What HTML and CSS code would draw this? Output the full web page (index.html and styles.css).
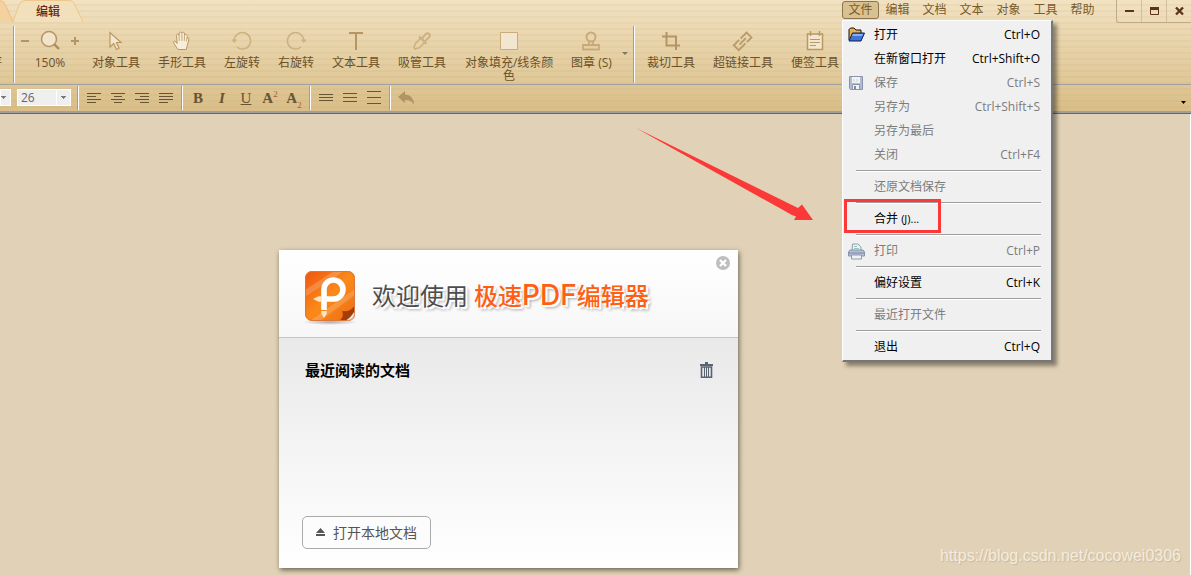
FILE: index.html
```html
<!DOCTYPE html>
<html lang="zh-CN">
<head>
<meta charset="utf-8">
<title>极速PDF编辑器</title>
<link rel="stylesheet" href="styles.css">
</head>
<body>
<div class="app">
  <header class="chrome">
    <div class="titlebar">
      <div class="tabs">
        <svg class="tab-prev" width="13" height="23" viewBox="0 0 13 23" aria-hidden="true"><path d="M0 1Q4 1 6 6L13 22H0Z" fill="#f4d2a0"/><path d="M0 .5Q4 .5 6 6L13 22" fill="none" stroke="#f3bb80"/></svg>
        <button class="tab" type="button">
          <svg class="tab-shape" viewBox="0 0 70 23" preserveAspectRatio="none" aria-hidden="true"><path d="M0 22L6 5Q8 .5 12 .5H57Q60 .5 62 5L70 22Z" fill="#f2dfbc"/><path d="M0 22L6 5Q8 .5 12 .5H57Q60 .5 62 5L70 22" fill="none" stroke="#efc78c"/></svg>
          <span class="tab-label">编辑</span>
        </button>
      </div>
      <nav class="menubar">
        <div class="menu-anchor">
          <button class="menu-btn open" type="button">文件</button>
          <div class="menu" role="menu">
            <button class="item" type="button"><span class="ico"><svg width="17" height="16" viewBox="0 0 17 16"><path d="M1 13V2.500L2.500 1H6L8 3H13V6" fill="#e9b04c" stroke="#111"/><path d="M1 14L4.500 6H16.500L13 14Z" fill="#3f74d8" stroke="#111b55"/><path d="M5 7H15L14 9H4Z" fill="#83b2f4"/></svg></span><span>打开</span><kbd>Ctrl+O</kbd></button>
            <button class="item" type="button"><span class="ico"></span><span>在新窗口打开</span><kbd>Ctrl+Shift+O</kbd></button>
            <button class="item" type="button" disabled><span class="ico"><svg width="16" height="16" viewBox="0 0 16 16"><path d="M1.500 1.500H14.500V14.500H2.500L1.500 13.500Z" fill="#b3bbd2" stroke="#8a92ab"/><path d="M4 2H12V8H4Z" fill="#f3f3f3"/><path d="M6 4V7M9 4V7" stroke="#c8cedd"/><path d="M4.500 9.500H11.500V14.500H4.500Z" fill="#f3f3f3" stroke="#8c94ab"/><path d="M6 11H8V14H6Z" fill="#7e87a3"/></svg></span><span>保存</span><kbd>Ctrl+S</kbd></button>
            <button class="item" type="button" disabled><span class="ico"></span><span>另存为</span><kbd>Ctrl+Shift+S</kbd></button>
            <button class="item" type="button" disabled><span class="ico"></span><span>另存为最后</span></button>
            <button class="item" type="button" disabled><span class="ico"></span><span>关闭</span><kbd>Ctrl+F4</kbd></button>
            <hr>
            <button class="item" type="button" disabled><span class="ico"></span><span>还原文档保存</span></button>
            <hr>
            <button class="item marked" type="button"><span class="ico"></span><span>合并 <small>(J)...</small></span></button>
            <hr>
            <button class="item" type="button" disabled><span class="ico"><svg width="17" height="17" viewBox="0 0 17 17"><path d="M4 8L4.500 1H10L13 4V8Z" fill="#e6f4f4" stroke="#8ba2a8"/><path d="M6 3.500H9M6 5.500H11" stroke="#9bc3c4"/><path d="M2 7H15L16.500 9V13H.500V9Z" fill="#b6bfd5" stroke="#8891ae"/><path d="M1 10H16" stroke="#7c86a6"/><path d="M3.500 12H13.500V16H3.500Z" fill="#eef2f4" stroke="#909aac"/></svg></span><span>打印</span><kbd>Ctrl+P</kbd></button>
            <hr>
            <button class="item" type="button"><span class="ico"></span><span>偏好设置</span><kbd>Ctrl+K</kbd></button>
            <hr>
            <button class="item" type="button" disabled><span class="ico"></span><span>最近打开文件</span></button>
            <hr>
            <button class="item" type="button"><span class="ico"></span><span>退出</span><kbd>Ctrl+Q</kbd></button>
          </div>
        </div>
        <button class="menu-btn" type="button">编辑</button>
        <button class="menu-btn" type="button">文档</button>
        <button class="menu-btn" type="button">文本</button>
        <button class="menu-btn" type="button">对象</button>
        <button class="menu-btn" type="button">工具</button>
        <button class="menu-btn" type="button">帮助</button>
      </nav>
      <div class="win">
        <button type="button" aria-label="最小化"><svg width="11" height="10" viewBox="0 0 11 10"><path d="M1 5H10" stroke="#5a3418" stroke-width="2"/></svg></button>
        <button type="button" aria-label="最大化"><svg width="11" height="10" viewBox="0 0 11 10"><path d="M1.500 2V8.500H9.500V2" fill="none" stroke="#5a3418"/><path d="M1 2.500H10" stroke="#5a3418" stroke-width="3"/></svg></button>
        <button type="button" aria-label="关闭"><svg width="11" height="10" viewBox="0 0 11 10"><path d="M2 1.500L9 8.500M9 1.500L2 8.500" stroke="#5a3418" stroke-width="2.400"/></svg></button>
      </div>
    </div>

    <div class="toolbar">
      <span class="cut">存</span>
      <i class="sep"></i>
      <div class="zoom">
        <div class="zoom-row">
          <button type="button" aria-label="缩小"><svg width="10" height="20" viewBox="0 0 10 20"><path d="M1 10H9" stroke="#b59564" stroke-width="2"/></svg></button>
          <svg width="20" height="20" viewBox="0 0 20 20"><circle cx="9" cy="8" r="7.500" fill="#f1e4cb" stroke="#b59564" stroke-width="1.500"/><path d="M14 13L19 18" stroke="#ad8c5a" stroke-width="2.400"/></svg>
          <button type="button" aria-label="放大"><svg width="10" height="20" viewBox="0 0 10 20"><path d="M1 10H9M5 6V14" stroke="#b59564" stroke-width="2"/></svg></button>
        </div>
        <span>150%</span>
      </div>
      <button class="tool" type="button"><svg width="20" height="20" viewBox="0 0 20 20"><path d="M4 1.500V16L7.700 12.500L10.500 18.500L13 17.300L10.500 11.500H15Z" fill="#f3e7d0" stroke="#b99862" stroke-width="1.200"/></svg><span>对象工具</span></button>
      <button class="tool" type="button"><svg width="20" height="20" viewBox="0 0 20 20"><path d="M6 18.500L1.800 12.300Q1 10.500 2.500 10.300Q4 10.300 5.200 12.500L4.500 4.500Q4.500 3 5.700 3Q6.800 3 7 4.500L7.200 2.500Q7.400 1 8.500 1Q9.800 1 9.900 2.500V2.300Q10.400 1 11.400 1.200Q12.600 1.400 12.500 3V4.500Q13.300 3 14.400 3.500Q15.300 4 15.300 5.300L15 7.500Q15.500 6.500 16.300 6.800Q17.200 7.300 16.800 9L15 15.500Q14.600 17 14.300 18.500Z" fill="#f7edda" stroke="#b99862"/><path d="M7.200 4V10M9.900 3V10M12.500 4L12.300 10M15 7L14.500 10.500" stroke="#c7aa78" fill="none"/></svg><span>手形工具</span></button>
      <button class="tool" type="button"><svg width="20" height="20" viewBox="0 0 20 20"><path d="M2.200 10A8.200 8.200 0 1 1 5 16" fill="none" stroke="#ccb080" stroke-width="1.500"/><path d="M-.500 8.500H5L2.300 12Z" fill="#ccb080"/></svg><span>左旋转</span></button>
      <button class="tool" type="button"><svg width="20" height="20" viewBox="0 0 20 20"><path d="M17.800 10A8.200 8.200 0 1 0 15 16" fill="none" stroke="#ccb080" stroke-width="1.500"/><path d="M20.500 8.500H15L17.700 12Z" fill="#ccb080"/></svg><span>右旋转</span></button>
      <button class="tool" type="button"><svg width="20" height="20" viewBox="0 0 20 20"><path d="M3 2H17M10 2V19" stroke="#b59564" stroke-width="2"/></svg><span>文本工具</span></button>
      <button class="tool" type="button"><svg width="20" height="20" viewBox="0 0 20 20"><path d="M3 18L2 16.500L3.500 12.500L9 7L13 11L7.500 16.500Z" fill="#e8d2a6" stroke="#cdb182" stroke-width="1.600"/><path d="M7 5.500L14.500 13M10.500 7L14 2.700Q16 1.500 17.300 3Q18.500 4.500 17 6.500L13 10" fill="none" stroke="#cdb182" stroke-width="2"/></svg><span>吸管工具</span></button>
      <button class="tool wide" type="button"><svg width="20" height="20" viewBox="0 0 20 20"><path d="M1.500 1.500H18.500V18.500H1.500Z" fill="#f2e6d0" stroke="#c8ac7c"/></svg><span>对象填充/线条颜色</span></button>
      <button class="tool stamp" type="button"><svg width="20" height="20" viewBox="0 0 20 20"><circle cx="10" cy="6" r="4.500" fill="none" stroke="#c8aa78" stroke-width="2"/><path d="M8 10V13.500M12 10V13.500M2 14H18V18.500H2Z" fill="none" stroke="#c8aa78" stroke-width="1.800"/></svg><span>图章 (S)</span></button>
      <svg class="drop" width="6" height="4" viewBox="0 0 6 4" aria-hidden="true"><path d="M0 0H6L3 3Z" fill="#807867"/></svg>
      <i class="sep"></i>
      <button class="tool first" type="button"><svg width="20" height="20" viewBox="0 0 20 20"><path d="M1 5.500H15V19M5.500 1V14.500H19" fill="none" stroke="#b59564" stroke-width="2"/></svg><span>裁切工具</span></button>
      <button class="tool" type="button"><svg width="20" height="20" viewBox="0 0 20 20"><g transform="rotate(-45 10 10)" fill="none" stroke="#b99a68" stroke-width="1.800"><path d="M10 6.500H18.500V13.500H12M8 6.500H.500V13.500H10M5 10H14"/></g></svg><span>超链接工具</span></button>
      <button class="tool" type="button"><svg width="20" height="20" viewBox="0 0 20 20"><path d="M2.500 3H17.500V18.500H2.500Z" fill="#f2e6d0" stroke="#b99862" stroke-width="1.500"/><path d="M5.500 0V5M14.500 0V5" stroke="#b99862" stroke-width="1.500"/><path d="M5 8.500H15M5 11.500H15M5 14.500H11" stroke="#b99862"/></svg><span>便签工具</span></button>
    </div>

    <div class="format">
      <select class="combo face" aria-label="字体"><option></option></select>
      <select class="combo size" aria-label="字号"><option>26</option></select>
      <i class="sep"></i>
      <button type="button" aria-label="左对齐"><svg width="14" height="14" viewBox="0 0 14 14"><path d="M0 2.500H14M0 5.500H9M0 8.500H14M0 11.500H9"/></svg></button>
      <button type="button" aria-label="居中"><svg width="14" height="14" viewBox="0 0 14 14"><path d="M0 2.500H14M3 5.500H11M0 8.500H14M3 11.500H11"/></svg></button>
      <button type="button" aria-label="右对齐"><svg width="14" height="14" viewBox="0 0 14 14"><path d="M0 2.500H14M5 5.500H14M0 8.500H14M5 11.500H14"/></svg></button>
      <button type="button" aria-label="两端对齐"><svg width="14" height="14" viewBox="0 0 14 14"><path d="M0 2.500H14M0 5.500H14M0 8.500H14M0 11.500H9"/></svg></button>
      <i class="sep"></i>
      <button type="button"><b>B</b></button>
      <button type="button"><b class="it">I</b></button>
      <button type="button"><span class="un">U</span></button>
      <button type="button"><b>A</b><sup>2</sup></button>
      <button type="button"><b>A</b><sub>2</sub></button>
      <i class="sep"></i>
      <button type="button" aria-label="行距小"><svg width="14" height="14" viewBox="0 0 14 14"><path d="M0 3.500H14M0 6.500H14M0 9.500H14"/></svg></button>
      <button type="button" aria-label="行距中"><svg width="14" height="14" viewBox="0 0 14 14"><path d="M0 2.500H14M0 6.500H14M0 10.500H14"/></svg></button>
      <button type="button" aria-label="行距大"><svg width="14" height="14" viewBox="0 0 14 14"><path d="M0 .500H14M0 6.500H14M0 12.500H14"/></svg></button>
      <i class="sep"></i>
      <button type="button" aria-label="撤销"><svg width="16" height="16" viewBox="0 0 16 16"><path class="solid" d="M0 7L7 1V4.500Q16 5 16 15Q13.500 9.500 7 10V13Z"/></svg></button>
      <svg class="more" width="5" height="3" viewBox="0 0 5 3" aria-hidden="true"><path class="ink" d="M0 0H5L2.500 3Z"/></svg>
    </div>
  </header>

  <main class="stage">
    <section class="welcome">
      <header class="welcome-head">
        <svg class="logo" width="56" height="58" viewBox="0 0 56 58" role="img" aria-label="极速PDF编辑器">
          <defs>
            <linearGradient id="lg" x1="0" y1="0" x2="1" y2="1"><stop offset="0" stop-color="#ee5411"/><stop offset=".5" stop-color="#fb8a1a"/><stop offset="1" stop-color="#ee6a12"/></linearGradient>
            <radialGradient id="sh"><stop offset="0" stop-color="#777" stop-opacity=".6"/><stop offset="1" stop-color="#777" stop-opacity="0"/></radialGradient>
            <clipPath id="cp"><rect x="3" y="3" width="50" height="50" rx="7"/></clipPath>
          </defs>
          <ellipse cx="28" cy="54" rx="28" ry="3" fill="url(#sh)"/>
          <rect x="3" y="3" width="50" height="50" rx="7" fill="url(#lg)"/>
          <g clip-path="url(#cp)"><path d="M0 24L32 3H42L0 31ZM8 53L53 21V27L18 53Z" fill="#fff" opacity=".18"/><path d="M36 54Q43 49 40 43Q48 45 54 36V54Z" fill="#a53b08"/><path d="M41 54Q50 50 54 40V54Z" fill="#f5efe9"/></g>
          <rect x="3.500" y="3.500" width="49" height="49" rx="7" fill="none" stroke="#d9783c"/>
          <path d="M22 42V21.500A9.500 9.500 0 1 1 31.500 31H20" fill="none" stroke="#fff" stroke-width="5.600"/>
          <path d="M19.200 43H24.800V45.500L22 50L19.200 45.500ZM19 28.200V33.800H16.500L11 31L16.500 28.200Z" fill="#ffe3bf"/>
        </svg>
        <h1>欢迎使用 <em>极速<span class="latin">PDF</span>编辑器</em></h1>
        <button class="close" type="button" aria-label="关闭"><svg width="14" height="14" viewBox="0 0 14 14"><circle cx="7" cy="7" r="7" fill="#bebebe"/><path d="M4 4L10 10M10 4L4 10" stroke="#fff" stroke-width="2.400"/></svg></button>
      </header>
      <div class="welcome-body">
        <div class="recent">
          <h2>最近阅读的文档</h2>
          <button class="trash" type="button" aria-label="清空"><svg width="13" height="16" viewBox="0 0 13 16"><path d="M0 2H13V4H0ZM5 0H8V2H5Z" fill="#5c6370"/><path d="M1.500 5H11.500V15.200H1.500Z" fill="#e8e8ea" stroke="#5c6370" stroke-width="1.600"/><path d="M4.500 5V15M6.500 5V15M8.500 5V15" stroke="#5c6370"/></svg></button>
        </div>
        <button class="local" type="button"><svg width="9" height="8" viewBox="0 0 9 8"><path d="M4.500 0L9 5H0ZM0 6H9V8H0Z" fill="#555"/></svg>打开本地文档</button>
      </div>
    </section>
    <svg class="arrow" width="178" height="94" viewBox="0 0 178 94" aria-hidden="true"><path d="M0 0L162 80L166 76.500L177 92H158L160 88.500L156 87Z" fill="#fb3939"/></svg>
    <span class="watermark">https://blog.csdn.net/cocowei0306</span>
  </main>
</div>
</body>
</html>
```
FILE: styles.css
```css
*, *::after { box-sizing: border-box; }
body {
  margin: 0;
  font: 12px/16px "Open Sans", "Noto Sans CJK SC", sans-serif;
  color: #6b5127;
}
button, select { font: inherit; color: inherit; background: none; border: 0; margin: 0; padding: 0; }
svg { display: block; overflow: visible; flex: none; }
.app { min-height: 100vh; display: flex; flex-direction: column; overflow: hidden; background: #e1d1b6; }

.chrome {
  position: relative;
  z-index: 2;
  background:
    repeating-linear-gradient(#fff0 0 4px, #b98f4a14 4px 6px),
    linear-gradient(#f2e2c2, #d8bd87);
  border-bottom: 1px solid #666;
  box-shadow: inset 0 -2px #a0a0a0;
}
.titlebar { display: flex; height: 24px; }
.tabs { display: flex; flex: 1; }
.tab { position: relative; width: 70px; height: 23px; color: #6b2508; }
.tab-shape { position: absolute; inset: 0; width: 100%; height: 100%; }
.tab-label { position: relative; font-weight: 500; }
.menubar { display: flex; padding: 1px 15px 0 0; }
.menu-anchor { position: relative; }
.menu-btn { display: block; width: 37px; height: 18px; line-height: 18px; color: #7b5a2a; }
.menu-btn.open { background: #d8c08f; border: 1px solid #8a7550; border-radius: 3px; line-height: 16px; }
.win { display: flex; height: 23px; border: solid #c1ab85; border-width: 0 0 1px 1px; border-radius: 0 0 0 3px; }
.win button { width: 24px; display: grid; place-items: center; }
.win button + button { width: 25px; border-left: 1px solid #d3bf9a; }

.menu {
  position: absolute;
  top: 19px;
  left: 0;
  width: 211px;
  padding: 2px 0 1px;
  background: #f0f0f0;
  border: 1px solid #fff;
  border-right: 2px solid #777;
  border-bottom: 2px solid #777;
  box-shadow: 4px 4px 4px #0006;
  color: #000;
}
.item { display: flex; align-items: center; width: 100%; height: 24px; padding-right: 11px; text-align: left; white-space: nowrap; }
.item:disabled { color: #7c7c7c; }
.ico { width: 31px; padding-left: 5px; flex: none; }
.item kbd { margin-left: auto; font: 12px/16px "Open Sans", sans-serif; }
.item small { font-size: 11px; }
.menu hr { height: 2px; margin: 3px 10px 3px 13px; border: solid; border-width: 1px 0; border-color: #a0a0a0 #fff #fff #a0a0a0; }
.item.marked { position: relative; }
.item.marked::after { content: ""; position: absolute; top: -8px; left: 1px; width: 97px; height: 34px; border: 3px solid #fb3939; }

.sep { flex: none; width: 2px; border-left: 1px solid #9d9d9d; border-right: 1px solid #fff; }
.toolbar { display: flex; gap: 18px; height: 61px; padding-top: 2px; border-bottom: 1px solid #a0a0a0; }
.toolbar .sep { height: 57px; }
.cut { width: 13px; margin-right: -18px; padding: 28px 11px 0 0; direction: rtl; white-space: nowrap; }
.zoom { width: 60px; margin: 5px 0 0 -13px; text-align: center; line-height: 13px; }
.zoom-row { display: flex; justify-content: space-between; margin-bottom: 5px; }
.tool { display: flex; flex-direction: column; align-items: center; gap: 5px; flex: none; margin-top: 5px; line-height: 13px; height: 52px; }
.zoom + .tool { margin-left: -6px; }
.wide { width: 90px; word-break: break-all; }
.stamp { margin-left: -1px; }
.drop { margin: 26px -13px 0 -8px; }
.first { margin-left: -6px; }

.format { display: flex; align-items: center; height: 28px; padding-bottom: 3px; color: #675434; }
.format .sep { height: 24px; margin: 0 3px; }
.format button { display: flex; align-items: center; justify-content: center; width: 24px; height: 24px; font: 15px/16px "Liberation Serif", serif; }
.format svg path { stroke: #675434; }
.format svg .solid { fill: #b29464; stroke: none; }
.format svg .ink { fill: #000; stroke: none; }
.format .it { font-style: italic; }
.format .un { text-decoration: underline; }
.format sup, .format sub { font-size: 9px; line-height: 9px; color: #b0573c; }
.format sup { align-self: flex-start; margin-top: 4px; }
.format sub { align-self: flex-end; }
.combo {
  appearance: none;
  height: 17px;
  padding-left: 3px;
  background:
    linear-gradient(#7a7a7a, #7a7a7a) right 4px top 6px / 5px 1px no-repeat,
    linear-gradient(#7a7a7a, #7a7a7a) right 5px top 7px / 3px 1px no-repeat,
    linear-gradient(#7a7a7a, #7a7a7a) right 6px top 8px / 1px 1px no-repeat,
    linear-gradient(#fff, #fff) right 13px top / 1px 17px no-repeat,
    #efefef;
  border: 1px solid #fff;
  font-size: 12px;
  line-height: 15px;
  color: #666;
}
.face { width: 11px; margin-right: 6px; padding: 0; }
.size { width: 54px; margin-right: 3px; }
.more { margin: 10px 5px 0 auto; }

.stage { position: relative; flex: 1; padding: 136px 24px 6px 279px; border-right: 1px solid #fff; }
.welcome { display: flex; flex-direction: column; max-width: 459px; min-height: 318px; background: #fff; box-shadow: 1px 2px 5px #0008; }
.welcome-head {
  display: flex;
  align-items: center;
  height: 88px;
  padding: 6px 8px 0 23px;
  background: linear-gradient(#fff, #f7f7f7);
  border-bottom: 1px solid #c4c4c4;
}
h1 {
  margin: 0 auto 0 14px;
  font: 400 24px/32px Roboto, "Noto Sans CJK SC", sans-serif;
  color: #4d4d4d;
  white-space: nowrap;
  text-shadow: 0 0 2px #fff, 1px 1px #fff, 2px 2px #fff, 3px 3px 3px #0005;
}
h1 em { font-style: normal; font-weight: 500; color: #ff5f13; }
.latin { font-family: Inter, sans-serif; font-size: 28px; line-height: 24px; }
.close { align-self: flex-start; }
.welcome-body { flex: 1; display: flex; flex-direction: column; justify-content: space-between; align-items: flex-start; padding: 20px 25px 19px 23px; background: linear-gradient(#e9e9e9, #fff); }
.recent { display: flex; align-items: center; justify-content: space-between; width: 100%; padding-left: 3px; }
h2 { margin: 0; font: 700 15px/24px "Noto Sans CJK SC", sans-serif; color: #000; }
.local { display: flex; align-items: center; gap: 8px; height: 33px; padding: 0 13px 1px; border: 1px solid #aaa; border-radius: 5px; font: 14px/20px "Noto Sans CJK SC", sans-serif; color: #555; background: #fcfcfc; }
.arrow { position: absolute; left: 636px; top: 14px; }
.watermark { position: absolute; right: 9px; bottom: 9px; font: 16px/20px "Liberation Sans", sans-serif; color: #f3ece0; text-shadow: 1px 1px 1px #c9b999; }
```
